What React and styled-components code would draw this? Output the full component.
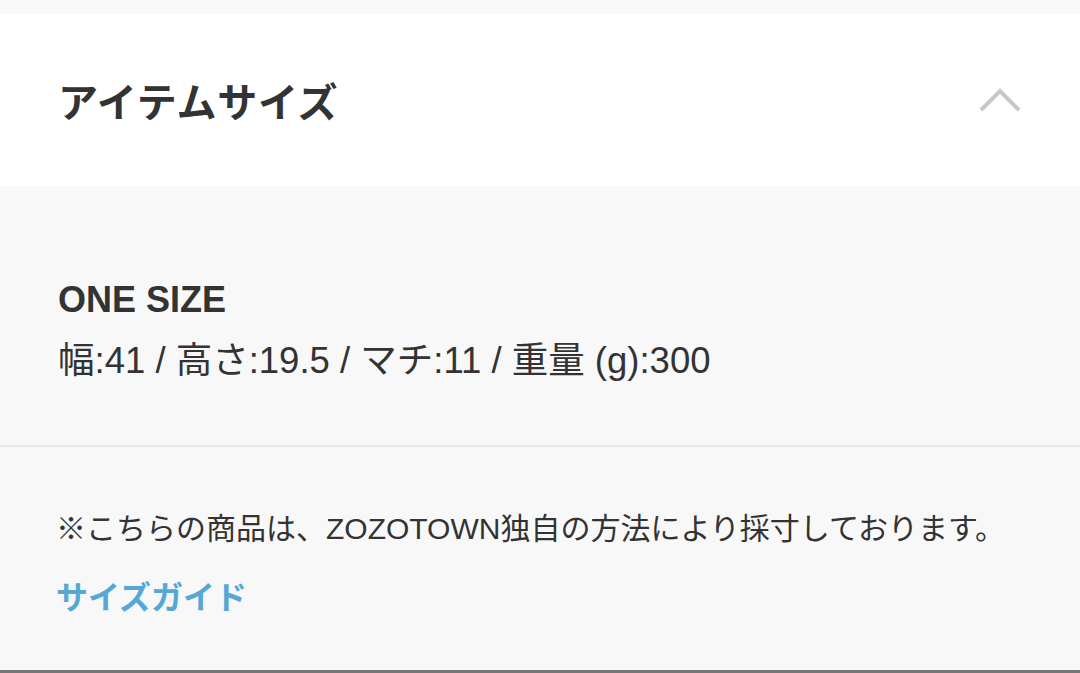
import React from 'react'
import styled, { createGlobalStyle } from 'styled-components'

const GlobalStyle = createGlobalStyle`
  html, body {
    margin: 0;
    padding: 0;
    background: #f8f8f8;
  }
  body {
    font-family: "Liberation Sans", "Noto Sans CJK JP", sans-serif;
    color: #333;
  }
`;

const App = () => {
  return (
    <>
      <GlobalStyle />
      <StyledPage>
        <StyledHeader>
          <StyledTitle>アイテムサイズ</StyledTitle>
          <StyledChevron viewBox="0 0 44 28" aria-hidden="true">
            <path d="M3 24 L22 5 L41 24" />
          </StyledChevron>
        </StyledHeader>
        <StyledSizeBlock>
          <StyledSizeName>ONE SIZE</StyledSizeName>
          <StyledSizeText>幅:41 / 高さ:19.5 / マチ:11 / 重量 (g):300</StyledSizeText>
        </StyledSizeBlock>
        <StyledNoteBlock>
          <StyledNote>※こちらの商品は、ZOZOTOWN独自の方法により採寸しております。</StyledNote>
          <StyledLink href="#">サイズガイド</StyledLink>
        </StyledNoteBlock>
      </StyledPage>
    </>
  );
}

const StyledPage = styled.div`
  width: 1080px;
  height: 673px;
  padding-top: 14px;
  box-sizing: border-box;
  background: #f8f8f8;
  display: flex;
  flex-direction: column;
  overflow: hidden;
`;

const StyledHeader = styled.div`
  height: 172px;
  flex-shrink: 0;
  background: #fff;
  display: flex;
  align-items: center;
  justify-content: space-between;
  padding: 0 58px 0 58px;
`;

const StyledTitle = styled.h2`
  margin: 0;
  font-family: "Noto Sans CJK JP", sans-serif;
  font-size: 40px;
  font-weight: 700;
  letter-spacing: 0.8px;
  color: #333;
`;

const StyledChevron = styled.svg`
  width: 44px;
  height: 28px;
  fill: none;
  stroke: #c8c8c8;
  stroke-width: 4;
`;

const StyledSizeBlock = styled.div`
  height: 261px;
  flex-shrink: 0;
  box-sizing: border-box;
  padding: 92px 58px 0;
  border-bottom: 2px solid #e8e8e8;
`;

const StyledSizeName = styled.div`
  font-size: 36px;
  font-weight: 700;
  line-height: 44px;
  color: #333;
`;

const StyledSizeText = styled.div`
  margin-top: 17px;
  font-size: 36.5px;
  font-weight: 400;
  line-height: 44px;
  color: #333;
`;

const StyledNoteBlock = styled.div`
  flex: 1;
  box-sizing: border-box;
  padding: 62px 56px 0;
  border-bottom: 3px solid #777;
`;

const StyledNote = styled.p`
  margin: 0;
  font-size: 30px;
  line-height: 40px;
  color: #333;
  white-space: nowrap;
`;

const StyledLink = styled.a`
  display: inline-block;
  margin-top: 26px;
  font-family: "Noto Sans CJK JP", sans-serif;
  font-size: 32px;
  font-weight: 700;
  line-height: 40px;
  color: #55a8d6;
  text-decoration: none;
`;

export default App
